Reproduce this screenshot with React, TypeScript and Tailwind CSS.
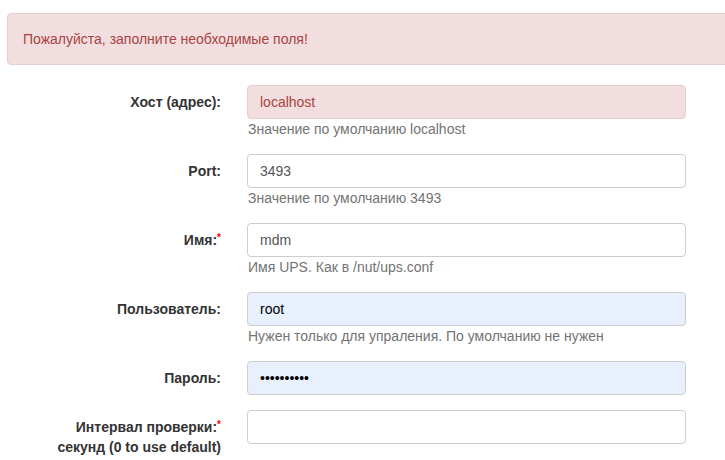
import React from "react";

interface IFieldProps {
  label: React.ReactNode;
  value: string;
  help?: string;
  variant?: "error" | "autofill" | "plain";
  required?: boolean;
}

const Field = ({ label, value, help, variant = "plain", required }: IFieldProps) => {
  const inputClass =
    variant === "error"
      ? "bg-[#f2dede] border-[#ebccd1] text-[#a94442]"
      : variant === "autofill"
      ? "bg-[#e8f0fe] border-[#ccc] text-black"
      : "bg-white border-[#ccc] text-[#555]";

  return (
    <div className="flex flex-row mb-[15px]">
      <div className="w-[247px] shrink-0 pr-[26px] pt-[7px] text-right font-bold text-[14px] leading-[20px] text-[#333]">
        {label}
        {required && <span className="text-[#ff0000] text-[10px] align-top relative top-[-2px]">*</span>}
      </div>
      <div className="w-[439px] shrink-0">
        <input
          readOnly
          value={value}
          className={`block w-full h-[34px] px-[12px] py-[6px] border rounded-[4px] text-[14px] leading-[20px] outline-none ${inputClass}`}
        />
        {help && (
          <p className="pl-[1px] text-[14px] leading-[20px] text-[#737373]">{help}</p>
        )}
      </div>
    </div>
  );
};

const App = () => {
  return (
    <div
      className="w-[725px] h-[460px] overflow-hidden bg-white"
      style={{ fontFamily: '"Liberation Sans", Arial, sans-serif' }}
    >
      <div className="pt-[13px]">
        <div className="ml-[7px] w-[780px] bg-[#f2dede] border border-[#ebccd1] rounded-[4px] p-[15px] text-[14px] leading-[20px] text-[#a94442]">
          Пожалуйста, заполните необходимые поля!
        </div>
      </div>
      <div className="mt-[20px]">
        <Field label="Хост (адрес):" value="localhost" help="Значение по умолчанию localhost" variant="error" />
        <Field label="Port:" value="3493" help="Значение по умолчанию 3493" />
        <Field label="Имя:" required value="mdm" help="Имя UPS. Как в /nut/ups.conf" />
        <Field
          label="Пользователь:"
          value="root"
          help="Нужен только для упраления. По умолчанию не нужен"
          variant="autofill"
        />
        <Field label="Пароль:" value="••••••••••" variant="autofill" />
        <div className="flex flex-row">
          <div className="w-[247px] shrink-0 pr-[26px] pt-[7px] text-right font-bold text-[14px] leading-[20px] text-[#333]">
            Интервал проверки:
            <span className="text-[#ff0000] text-[10px] align-top relative top-[-2px]">*</span>
            <br />
            секунд (0 to use default)
          </div>
          <div className="w-[439px] shrink-0">
            <input
              readOnly
              value=""
              className="block w-full h-[34px] px-[12px] py-[6px] border border-[#ccc] rounded-[4px] bg-white text-[14px] outline-none"
            />
          </div>
        </div>
      </div>
    </div>
  );
};

export default App;
